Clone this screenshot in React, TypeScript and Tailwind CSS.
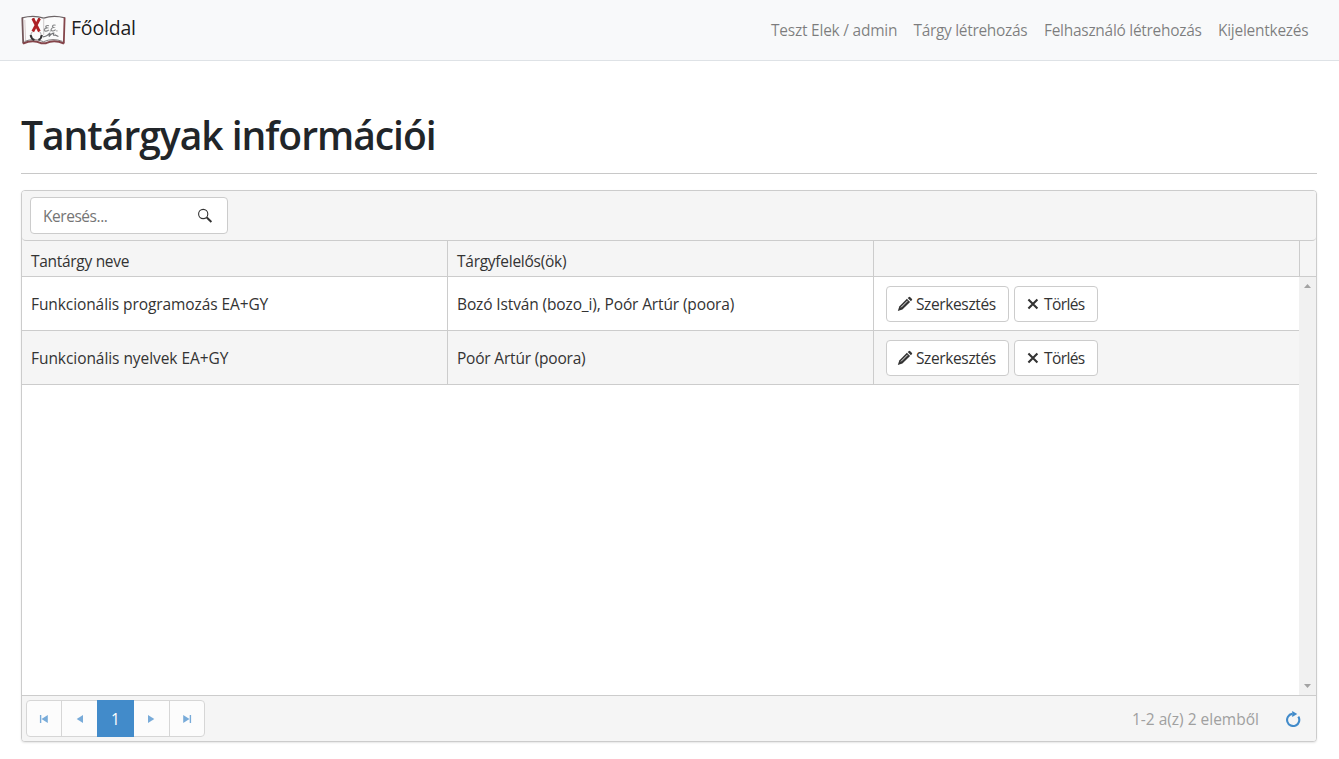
import React from "react";

type Subject = { name: string; owners: string; ownersTracking: string; nameTracking: string };

const subjects: Subject[] = [
  {
    name: "Funkcionális programozás EA+GY",
    owners: "Bozó István (bozo_i), Poór Artúr (poora)",
    nameTracking: "tracking-[-0.09px]",
    ownersTracking: "tracking-[-0.13px]",
  },
  {
    name: "Funkcionális nyelvek EA+GY",
    owners: "Poór Artúr (poora)",
    nameTracking: "tracking-[-0.06px]",
    ownersTracking: "tracking-[-0.2px]",
  },
];

function BookLogo() {
  return (
    <svg className="h-[31px] w-[45px]" viewBox="0 0 45 31" fill="none">
      <path d="M1.5 2.5 L4 26.5 Q13 22.5 22 27 Q32 22.5 42 26.5 L43.5 2.5 Q32 -.5 23 3 Q12 -.5 1.5 2.5Z" fill="#fbfbfb" />
      <path d="M1 2.8 Q13 -.4 22.7 3.2 Q32 -.4 44 2.8" stroke="#6d6567" strokeWidth="1.3" />
      <path d="M1.3 2.5 L2.2 28.5" stroke="#75585b" strokeWidth="1.8" />
      <path d="M3.8 5 L4.6 25.5" stroke="#d9cccd" strokeWidth="1" />
      <path d="M43.6 2.5 L42.8 28.5" stroke="#85464b" strokeWidth="1.8" />
      <path d="M2 28.5 Q12 24.3 20 28.2 L25 28.2 Q33 24.3 43 28.5" stroke="#85454a" strokeWidth="2" />
      <path d="M3.5 26.4 Q13 22.6 22.5 26.7 Q32 22.6 41.5 26.4" stroke="#655d60" strokeWidth="0.8" />
      <path d="M22.7 3.5 V20" stroke="#cfcaca" strokeWidth="1" />
      <path d="M11.8 3.5 L18.4 16.5 M18.6 3.5 L11.8 16.5" stroke="#b02025" strokeWidth="2.8" />
      <path d="M11.4 4 H13.4 M17 4 H19 M15 7.5 V11.5" stroke="#a52226" strokeWidth="1.6" />
      <path d="M11.5 16.5 C9.5 19 9.5 20.5 10.5 22 M18.5 16.5 C20.5 19 20.5 20.5 19.5 22" stroke="#aaa6a8" strokeWidth="1" />
      <path d="M9.6 20 Q10.3 24 13.4 25 M20.8 20 Q20.3 24 17.4 25" stroke="#353335" strokeWidth="2" />
      <path d="M28 10.8 C25 9.8 23.6 12 26 12.8 C22.8 13.4 22.4 16.2 25.2 16.2 Q26.8 16 27.8 14.8 M34.6 10.3 C31.6 9.3 30.4 11.7 32.6 12.5 C29.5 13.2 29.2 16 32 16 Q33.6 15.8 34.6 14.6" stroke="#88898a" strokeWidth="1.2" />
      <path d="M28.8 16 H29.8 M35.4 15.8 H36.4" stroke="#88898a" strokeWidth="1.2" />
      <path d="M21.8 21.8 Q26 21.5 29 17.8 L28 21.5 Q31 17.8 32.8 18.1 Q31.5 21 34 20 L37.4 21.5" stroke="#747578" strokeWidth="1.2" />
    </svg>
  );
}

function SearchIcon() {
  return (
    <svg className="h-4 w-4 shrink-0" viewBox="0 0 16 16" fill="none" stroke="#333">
      <circle cx="6.2" cy="6" r="4.6" strokeWidth="1.1" />
      <path d="M9.8 9.5 L14.4 14" strokeWidth="2" />
    </svg>
  );
}

function PencilIcon() {
  return (
    <svg className="h-4 w-4 shrink-0" viewBox="0 0 16 16" fill="#333">
      <path d="M.8 15 L2.3 10.4 L9.9 2.8 L13.1 6 L5.4 13.6Z" />
      <path d="M10.7 2 L12 .9 Q12.5 .5 13 .9 L15 2.9 Q15.4 3.4 15 3.9 L13.9 5.2Z" />
      <path d="M4 11.4 L10.6 4.8" stroke="#fff" strokeWidth="0.9" />
    </svg>
  );
}

function CrossIcon() {
  return (
    <svg className="h-4 w-4 shrink-0" viewBox="0 0 16 16" fill="none" stroke="#333" strokeWidth="2.1">
      <path d="M3.4 3.6 L12.4 12.4 M12.4 3.6 L3.4 12.4" />
    </svg>
  );
}

function Arrow({ left = false, bar = false }: { left?: boolean; bar?: boolean }) {
  return (
    <svg className={left ? "h-4 w-4 -scale-x-100" : "h-4 w-4"} viewBox="0 0 16 16" fill="#78abd9">
      {bar ? <path d="M4.2 4 L10.5 8 L4.2 12Z M10.7 4 H12.1 V12 H10.7Z" /> : <path d="M5 4 L11.3 8 L5 12Z" />}
    </svg>
  );
}

function RowButton({ children, className }: { children: React.ReactNode; className: string }) {
  return (
    <button className={`flex h-9 items-center rounded-[4px] border border-[#ccc] bg-white whitespace-nowrap text-[#333] ${className}`}>
      {children}
    </button>
  );
}

function NavBar() {
  return (
    <nav className="flex h-[61px] items-center justify-between border-b border-[#dee2e6] bg-[#f8f9fa] pr-[30px] pl-[21px]">
      <a className="flex items-center text-[19.5px] leading-[30px] text-black/90">
        <BookLogo />
        <span className="ml-[5px] -translate-y-[2px] tracking-[-0.2px]">Főoldal</span>
      </a>
      <div className="flex gap-4 whitespace-nowrap text-black/50">
        <a className="w-[126.5px] tracking-[-0.23px]">Teszt Elek / admin</a>
        <a className="w-[114.5px] tracking-[-0.32px]">Tárgy létrehozás</a>
        <a className="w-[158px] tracking-[-0.29px]">Felhasználó létrehozás</a>
        <a className="w-[91px] tracking-[-0.27px]">Kijelentkezés</a>
      </div>
    </nav>
  );
}

function Pager() {
  return (
    <footer className="flex h-[46px] items-center justify-between border-t border-[#ccc] bg-[#f5f5f5] pr-[15px] pl-1 text-[#a0a0a0]">
      <div className="flex h-[37px] w-[179px] rounded-[4px] border border-[#d6d6d6] bg-[#fcfcfc]">
        <button className="flex w-[35px] items-center justify-center border-r border-[#d6d6d6] pr-px"><Arrow left bar /></button>
        <button className="flex w-[35px] items-center justify-center"><Arrow left /></button>
        <button className="-my-px flex w-[37px] items-center justify-center bg-[#428bca] text-white">1</button>
        <button className="flex w-9 items-center justify-center border-r border-[#d6d6d6] pr-px"><Arrow /></button>
        <button className="flex w-[34px] items-center justify-center pr-px"><Arrow bar /></button>
      </div>
      <div className="flex items-center whitespace-nowrap">
        <span className="mr-[26px] w-[127px] tracking-[-0.01px]">1-2 a(z) 2 elemből</span>
        <svg className="h-4 w-4" viewBox="0 0 16 16" fill="none">
          <path d="M7.2 2.9 A6.1 6.1 0 1 0 13.3 5.6" stroke="#428bca" strokeWidth="2.1" />
          <path d="M7.2 0 L12.2 3 L7.2 6Z" fill="#428bca" />
        </svg>
      </div>
    </footer>
  );
}

export default function App() {
  return (
    <div className="h-[759px] overflow-hidden bg-white font-['Open_Sans','Noto_Sans',sans-serif] text-[15.5px] leading-6 text-[#333]">
      <NavBar />
      <main className="px-[21px] pt-[50px]">
        <div className="flex h-[63px] w-[1296px] items-start border-b border-[#c8c8c8]">
          <h1 className="text-[39px] leading-[48px] font-semibold tracking-[-1.02px] whitespace-nowrap text-[#212529]">Tantárgyak információi</h1>
        </div>
        <section className="mt-4 flex h-[552px] w-[1296px] flex-col overflow-hidden rounded-[4px] border border-[#ccc] bg-white shadow-[0_1px_2px_rgba(0,0,0,0.1)]">
          <div className="bg-[#f5f5f5]">
            <div className="h-[50px] rounded-b-[4px] border-b border-[#ccc] pt-[6px] pl-2">
              <label className="flex h-[37px] w-[198px] items-center justify-between rounded-[4px] border border-[#ccc] bg-white pr-[14px] pl-3 text-[#757575]">
                <span className="tracking-[-0.45px]">Keresés...</span>
                <SearchIcon />
              </label>
            </div>
          </div>
          <div className="flex h-9 shrink-0 border-b border-[#ccc] bg-[#f5f5f5]">
            <div className="w-[426px] border-r border-[#ccc] pt-2 pl-[9px]"><span className="tracking-[-0.3px]">Tantárgy neve</span></div>
            <div className="w-[426px] border-r border-[#ccc] pt-2 pl-[9px]"><span className="tracking-[-0.26px]">Tárgyfelelős(ök)</span></div>
            <div className="w-[426px] border-r border-[#ccc]" />
          </div>
          <div className="flex flex-1">
            <div className="w-[1277px]">
              {subjects.map((s, i) => (
                <div key={s.name} className={`flex h-[54px] items-stretch border-b border-[#ccc] whitespace-nowrap ${i % 2 ? "bg-[#f5f5f5]" : "bg-white"}`}>
                  <div className="flex w-[426px] items-center border-r border-[#ccc] pl-[9px]"><span className={s.nameTracking}>{s.name}</span></div>
                  <div className="flex w-[426px] items-center border-r border-[#ccc] pl-[9px]"><span className={s.ownersTracking}>{s.owners}</span></div>
                  <div className="flex items-center gap-[5px] pl-3">
                    <RowButton className="w-[123px] pl-[10px]">
                      <PencilIcon />
                      <span className="ml-[3px] tracking-[-0.38px]">Szerkesztés</span>
                    </RowButton>
                    <RowButton className="w-[84px] pl-[10px]">
                      <CrossIcon />
                      <span className="ml-[3px] tracking-[-0.6px]">Törlés</span>
                    </RowButton>
                  </div>
                </div>
              ))}
            </div>
            <div className="flex w-[17px] flex-col items-center justify-between bg-[#f1f1f1] pt-[7px] pb-[7px]">
              <svg className="h-1 w-[7px]" viewBox="0 0 7 4" fill="#a3a3a3"><path d="M0 4 L3.5 0 L7 4Z" /></svg>
              <svg className="h-1 w-[7px]" viewBox="0 0 7 4" fill="#a3a3a3"><path d="M0 0 H7 L3.5 4Z" /></svg>
            </div>
          </div>
          <Pager />
        </section>
      </main>
    </div>
  );
}
